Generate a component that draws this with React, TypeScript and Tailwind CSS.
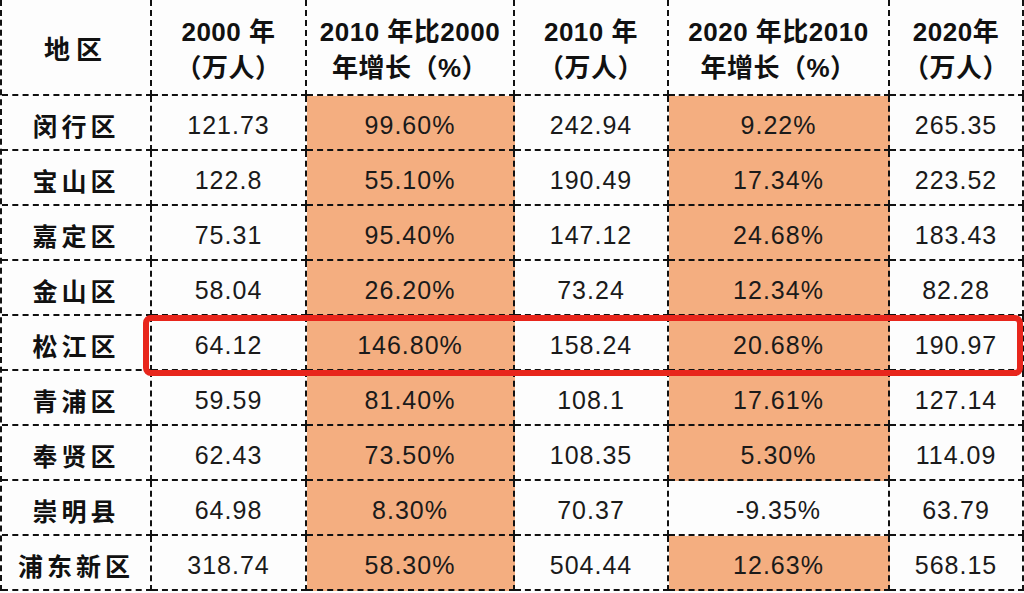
import React from "react";

type Row = {
  name: string;
  y2000: string;
  g1: string;
  y2010: string;
  g2: string;
  y2020: string;
  g2Hot: boolean;
};

const rows: Row[] = [
  { name: "闵行区", y2000: "121.73", g1: "99.60%", y2010: "242.94", g2: "9.22%", y2020: "265.35", g2Hot: true },
  { name: "宝山区", y2000: "122.8", g1: "55.10%", y2010: "190.49", g2: "17.34%", y2020: "223.52", g2Hot: true },
  { name: "嘉定区", y2000: "75.31", g1: "95.40%", y2010: "147.12", g2: "24.68%", y2020: "183.43", g2Hot: true },
  { name: "金山区", y2000: "58.04", g1: "26.20%", y2010: "73.24", g2: "12.34%", y2020: "82.28", g2Hot: true },
  { name: "松江区", y2000: "64.12", g1: "146.80%", y2010: "158.24", g2: "20.68%", y2020: "190.97", g2Hot: true },
  { name: "青浦区", y2000: "59.59", g1: "81.40%", y2010: "108.1", g2: "17.61%", y2020: "127.14", g2Hot: true },
  { name: "奉贤区", y2000: "62.43", g1: "73.50%", y2010: "108.35", g2: "5.30%", y2020: "114.09", g2Hot: true },
  { name: "崇明县", y2000: "64.98", g1: "8.30%", y2010: "70.37", g2: "-9.35%", y2020: "63.79", g2Hot: false },
  { name: "浦东新区", y2000: "318.74", g1: "58.30%", y2010: "504.44", g2: "12.63%", y2020: "568.15", g2Hot: true },
];

const cell = "flex items-center justify-center border-r-2 border-b-2 border-dashed border-[#111]";
const head = `${cell} h-[96px] flex-col pt-[6px] text-[26px] font-bold leading-[36px] tracking-[0.5px] text-[#111]`;
const body = `${cell} h-[55px] pt-[7px] text-[25px] tracking-[1px] text-[#1a1a1a]`;

export default function App() {
  return (
    <div className="relative h-[593px] w-[1024px] overflow-hidden bg-[#fdfdfd] font-['Liberation_Sans','Noto_Sans_CJK_SC',sans-serif]">
      <div className="grid grid-cols-[150px_155px_208px_154px_221px_134px] border-l-2 border-dashed border-[#111]">
        <div className={head}>
          <span className="tracking-[6px]">地区</span>
        </div>
        <div className={head}>
          <span>2000 年</span>
          <span>（万人）</span>
        </div>
        <div className={head}>
          <span>2010 年比2000</span>
          <span>年增长（%）</span>
        </div>
        <div className={head}>
          <span>2010 年</span>
          <span>（万人）</span>
        </div>
        <div className={head}>
          <span>2020 年比2010</span>
          <span>年增长（%）</span>
        </div>
        <div className={head}>
          <span>2020年</span>
          <span>（万人）</span>
        </div>

        {rows.map((r) => (
          <React.Fragment key={r.name}>
            <div className={`${body} font-bold tracking-[4px] text-[#111] text-[24px] font-['Noto_Sans_CJK_SC',sans-serif]`}>
              {r.name}
            </div>
            <div className={body}>{r.y2000}</div>
            <div className={`${body} bg-[#f4ae80]`}>{r.g1}</div>
            <div className={body}>{r.y2010}</div>
            <div className={`${body} ${r.g2Hot ? "bg-[#f4ae80]" : ""}`}>{r.g2}</div>
            <div className={body}>{r.y2020}</div>
          </React.Fragment>
        ))}
      </div>

      {/* red highlight round 松江区 row */}
      <div className="pointer-events-none absolute left-[143px] top-[315px] h-[61px] w-[880px] rounded-lg border-[6px] border-[#e8261c]" />
    </div>
  );
}
